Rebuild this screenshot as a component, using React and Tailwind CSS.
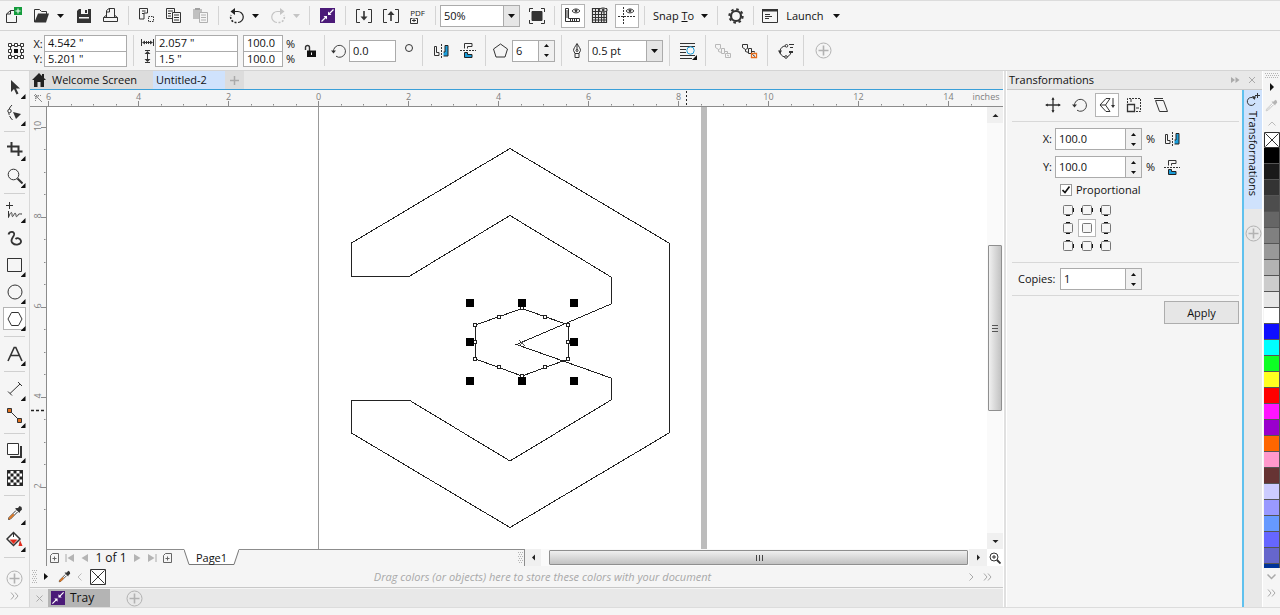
import React from "react";

function Icon({ w = 20, h = w, className = "", children, ...rest }) {
  return (
    <svg width={w} height={h} viewBox={`0 0 ${w} ${h}`} fill="none" stroke="#333" aria-hidden="true" className={`shrink-0 ${className}`} {...rest}>
      {children}
    </svg>
  );
}

function Tool({ label, className = "", active = false, children }) {
  return (
    <button
      type="button"
      aria-label={label}
      className={`relative flex w-[27px] shrink-0 items-center justify-center ${className}`}
    >
      <span className={`flex h-6 w-6 items-center justify-center border ${active ? "border-[#b4b4b4] bg-white" : "border-transparent"}`}>
        {children}
      </span>
    </button>
  );
}

function Caret({ color = "#111" }) {
  return (
    <Icon w={7} h={4}>
      <path d="M0 0h7L3.500 4z" fill={color} stroke="none" />
    </Icon>
  );
}

function CaretButton({ label, color, className = "mr-1" }) {
  return (
    <button type="button" aria-label={label} className={`flex w-[11px] shrink-0 items-center justify-center self-stretch ${className}`}>
      <Caret color={color} />
    </button>
  );
}

function Sep() {
  return <div className="mx-1 w-px shrink-0 self-stretch bg-[#d4d4d4]" />;
}

function Spin({ label, height = "h-[22px]", width, value, id }) {
  return (
    <div className={`flex shrink-0 border border-[#ababab] bg-white ${height} ${width}`}>
      <input id={id} aria-label={label} defaultValue={value} className="w-0 min-w-0 flex-1 bg-white px-[3px] outline-none" />
      <div className="flex w-4 flex-col border-l border-[#ababab] bg-[#f0f0f0]">
        <button type="button" aria-label={`Increase ${label}`} className="flex flex-1 items-center justify-center">
          <Icon w={5} h={3}><path d="M0 3h5L2.500 0z" fill="#111" stroke="none" /></Icon>
        </button>
        <button type="button" aria-label={`Decrease ${label}`} className="flex flex-1 items-center justify-center">
          <Icon w={5} h={3}><path d="M0 0h5L2.500 3z" fill="#111" stroke="none" /></Icon>
        </button>
      </div>
    </div>
  );
}

function Combo({ label, value, width }) {
  return (
    <div className={`relative flex h-[22px] shrink-0 border border-[#ababab] bg-white ${width}`}>
      <select aria-label={label} className="w-full appearance-none bg-transparent px-[3px] outline-none">
        <option>{value}</option>
      </select>
      <span className="pointer-events-none absolute inset-y-0 right-0 flex w-4 items-center justify-center border-l border-[#ababab] bg-[#e6e6e6]">
        <Caret />
      </span>
    </div>
  );
}

function Pair({ a, b, la, lb, width }) {
  const cls = "block h-[15px] w-full bg-white px-[3px] outline-none";
  return (
    <div className={`shrink-0 border border-[#ababab] ${width}`}>
      <input aria-label={la} defaultValue={a} className={cls} />
      <input aria-label={lb} defaultValue={b} className={`${cls} border-t border-[#ababab]`} />
    </div>
  );
}

function MirrorH() {
  return (
    <Icon w={16} h={14}>
      <path d="M1.500 2.500h2v6h2.500v3H1.500z" />
      <path d="M8.500 0v14" strokeDasharray="2 1" />
      <path d="M14.500 2.500h-2v6h-1.500v3h3.500z" fill="#1b9dd9" stroke="#1b9dd9" />
      <path d="M15 1.500h-3v6.500h-1.500M15 1.500v10.500h-4.500" stroke="#222" />
    </Icon>
  );
}

function MirrorV() {
  return (
    <Icon w={16} h={15}>
      <path d="M4.500 5.500v-5H12v3H7.500v2" />
      <path d="M0 7.500h16" strokeDasharray="2 1" />
      <path d="M4.500 9.500h3v2H12v3H4.500z" fill="#1b9dd9" stroke="#222" />
    </Icon>
  );
}

function PlusCircle() {
  return (
    <Icon w={17} stroke="#b2b2b2">
      <circle cx="8.500" cy="8.500" r="7.500" />
      <path d="M8.500 3.500v10M3.500 8.500h10" strokeWidth="1.600" />
    </Icon>
  );
}

function Purple({ size = 15 }) {
  return (
    <svg width={size} height={size} viewBox="0 0 15 15" fill="none" stroke="#fff" strokeWidth="1.300" aria-hidden="true" className="shrink-0">
      <rect width="15" height="15" fill="#4b1a78" stroke="none" />
      <path d="M13.500 1.500 9 6M1.500 13.500 6 9" />
      <path d="M8 3.500V7h3.500zM7 11.500V8H3.500z" fill="#fff" stroke="none" />
    </svg>
  );
}

function Dropper({ w = 16, tip = "#d97828", body = "#333" }) {
  return (
    <svg width={w} height={w} viewBox="0 0 16 16" fill="none" stroke={body} aria-hidden="true" className="shrink-0">
      <path d="M9 5.500 2 12.500 1.500 14.500 3.500 14 10.500 7" fill="#fff" />
      <path d="M6 8.500 2 12.500 1.500 14.500 3.500 14 7.500 10z" fill={tip} stroke="none" />
      <path d="M8 3.500 12.500 8 13 6.500 15 4.500 14.500 2 12.500 1 11 3 9.500 3z" fill={body} stroke="none" />
    </svg>
  );
}

function Rotate({ size = 16 }) {
  return (
    <svg width={size} height={size} viewBox="0 0 16 16" fill="none" stroke="#444" aria-hidden="true" className="shrink-0">
      <path d="M2.500 9A6 6 0 1 1 5 13.200" />
      <path d="M0 7.500h5L2.500 10.500z" fill="#333" stroke="none" />
    </svg>
  );
}

function UndoGlyph({ color, flip }) {
  return (
    <svg width="16" height="16" viewBox="0 0 16 16" fill="none" stroke={color} strokeWidth="1.200" aria-hidden="true" className={flip ? "-scale-x-100" : ""}>
      <path d="M3 3.500h5.500A5.500 5.500 0 0 1 9 14.500" />
      <path d="M7.500 14.500A5.500 5.500 0 0 1 2 7" strokeWidth="1.600" strokeDasharray="2 1.500" />
      <path d="M1.500 3.500 6 0v7z" fill={color} stroke="none" />
    </svg>
  );
}

function StandardBar() {
  return (
    <div role="toolbar" aria-label="Standard" className="flex h-[31px] items-center border-t border-b border-t-[#dcdcdc] border-b-[#d4d4d4] bg-[#f5f5f5] py-[5px]">
      <Tool label="New" className="mr-px">
        <Icon w={17}>
          <path d="M10 3.500H5.500L1.500 7v8.500h10V9M5.500 3.500V7h-4" />
          <path d="M9 0h8v8H9z" fill="#149c3c" stroke="none" />
          <path d="M13 1.500v5M10.500 4h5" stroke="#fff" />
        </Icon>
      </Tool>
      <Tool label="Open">
        <Icon w={17}>
          <path d="M1.500 15V2.500h5l2 2h5V7" />
          <path d="M1.500 15 5 6.500h11L13 15.500H1.500z" fill="#333" stroke="none" />
        </Icon>
      </Tool>
      <CaretButton label="Recent files" />
      <Tool label="Save">
        <Icon w={16}>
          <path d="M1 3 3 1h12v14H1z" fill="#333" stroke="none" />
          <path d="M5 1h7v5H5zM3 9h10v1.500H3z" fill="#f5f5f5" stroke="none" />
          <path d="M9 2h2v3H9z" fill="#333" stroke="none" />
        </Icon>
      </Tool>
      <Tool label="Print">
        <Icon w={17}>
          <path d="M4.500 10V3.500L7 1.500h5.500V10M7.500 2v3H5M4 8.500l-2.500 2v4h14v-4l-2.500-2M1.500 10.500h14" />
        </Icon>
      </Tool>
      <Sep />
      <Tool label="Cut">
        <Icon w={17}>
          <path d="M1.500 12V1.500h8v4.500H6v6zM4 4h3.500M4 6.500h2" />
          <path d="M10.500 9.500h5v5h-5z" strokeDasharray="1.500 1" />
        </Icon>
      </Tool>
      <Tool label="Copy">
        <Icon w={17}>
          <path d="M7 11.500H1.500v-10h8V5M3 4h5M3 6.500h3M3 9h3" />
          <path d="M7.500 5.500h8v10h-8zM9 8h5M9 10.500h5M9 13h5" />
        </Icon>
      </Tool>
      <Tool label="Paste">
        <Icon w={17} stroke="#b0b0b0">
          <path d="M1 2h9v10H1z" fill="#c0c0c0" stroke="none" />
          <path d="M3 1h5v2H3z" fill="#a0a0a0" stroke="none" />
          <path d="M7.500 5.500h8v10h-8zM9 8h5M9 10.500h5M9 13h5" fill="#f5f5f5" />
        </Icon>
      </Tool>
      <Sep />
      <Tool label="Undo"><UndoGlyph color="#222" /></Tool>
      <CaretButton label="Undo history" className="mr-[3px]" />
      <Tool label="Redo"><UndoGlyph color="#c4c4c4" flip /></Tool>
      <CaretButton label="Redo history" color="#c4c4c4" className="mr-[3px]" />
      <Sep />
      <Tool label="Content exchange"><Purple /></Tool>
      <Sep />
      <Tool label="Import">
        <Icon w={16}>
          <path d="M4 1.500H.500v13H4M12 1.500h3.500v13H12" />
          <path d="M8 3v7" strokeWidth="1.600" />
          <path d="M4.500 8.500h7L8 12.500z" fill="#333" stroke="none" />
        </Icon>
      </Tool>
      <Tool label="Export">
        <Icon w={16}>
          <path d="M4 1.500H.500v13H4M12 1.500h3.500v13H12" />
          <path d="M8 5v8" strokeWidth="1.600" />
          <path d="M4.500 7h7L8 3z" fill="#333" stroke="none" />
        </Icon>
      </Tool>
      <Tool label="Publish to PDF">
        <span className="flex flex-col items-center">
          <span className="text-[8px] leading-[9px] text-[#222]">PDF</span>
          <Icon w={8} h={7} className="mr-2"><path d="M2.500 1.500h-2v5h7v-5h-2M4 1v4M2 3.500h4" /></Icon>
        </span>
      </Tool>
      <Sep />
      <div className="mr-[3px] flex">
        <Combo label="Zoom level" value="50%" width="w-20" />
      </div>
      <Tool label="Full screen preview">
        <Icon w={16}>
          <path d="M3 3.500h10v9H3z" fill="#333" />
          <path d="M.500 4V.500H4M12 .500h3.500V4M15.500 12v3.500H12M4 15.500H.500V12" />
        </Icon>
      </Tool>
      <Sep />
      <Tool label="Show rulers" active>
        <Icon w={17}>
          <path d="M1.500 1.500h3v10h11v3h-14zM2 4h2M2 6h2M2 8h2M2 10h2M6.500 12v2M8.500 12v2M10.500 12v2M12.500 12v2" />
          <path d="M8 4c2-2.700 6-2.700 8 0-2 2.500-6 2.500-8 0z" />
          <circle cx="12" cy="3.800" r="1" fill="#333" />
        </Icon>
      </Tool>
      <Tool label="Show grid">
        <Icon w={17}>
          <path d="M1.500 1.500h14v14h-14zM4.500 1v15M7.500 1v15M10.500 1v15M13 1v15M1 4.500h15M1 7.500h15M1 10.500h15M1 13h15" strokeWidth="1.200" />
          <path d="M8 3c2-2.700 6-2.700 8.500 0-2.500 2.500-6.500 2.500-8.500 0z" fill="#f5f5f5" />
          <circle cx="12.200" cy="3" r="1" fill="#333" />
        </Icon>
      </Tool>
      <Tool label="Show guidelines" active>
        <Icon w={17}>
          <path d="M5.500 0v17M0 9.500h17" strokeDasharray="2 1" />
          <path d="M8 4c2-2.700 6-2.700 8 0-2 2.500-6 2.500-8 0z" />
          <circle cx="12" cy="3.800" r="1" fill="#333" />
        </Icon>
      </Tool>
      <Sep />
      <button type="button" className="ml-1 mr-[5px] flex items-center gap-[7px] whitespace-nowrap">
        <span>Snap <u>T</u>o</span>
        <Caret />
      </button>
      <Sep />
      <Tool label="Options">
        <Icon w={16}>
          <circle cx="8" cy="8" r="5" strokeWidth="2.200" />
          <circle cx="8" cy="8" r="6.700" strokeWidth="2" strokeDasharray="2.600 2.660" />
        </Icon>
      </Tool>
      <Sep />
      <button type="button" className="ml-1 flex items-center whitespace-nowrap">
        <Icon w={16} className="mr-2">
          <path d="M.500 1.500h15v13H.500zM3 6.500h5M3 8.500h7M3 10.500h4" />
          <path d="M0 1h16v2.500H0z" fill="#333" stroke="none" />
        </Icon>
        <span className="mr-[9px]">Launch</span>
        <Caret />
      </button>
    </div>
  );
}

function PropertyBar() {
  return (
    <div role="toolbar" aria-label="Property bar" className="flex h-10 items-center border-b border-[#d4d4d4] bg-[#f5f5f5] py-1">
      <Tool label="Object origin" className="mr-[5px]">
        <Icon w={16} className="ml-1">
          <path d="M2.500 2.500h11v11h-11z" />
          <path d="M.500.500h3v3h-3zM6.500.500h3v3h-3zM12.500.500h3v3h-3zM.500 6.500h3v3h-3zM12.500 6.500h3v3h-3zM.500 12.500h3v3h-3zM6.500 12.500h3v3h-3zM12.500 12.500h3v3h-3z" fill="#fff" />
          <path d="M6 6h4v4H6z" fill="#111" stroke="none" />
        </Icon>
      </Tool>
      <div className="w-3 text-center leading-[15px]">
        <div>X:</div>
        <div>Y:</div>
      </div>
      <Pair a={'4.542 "'} b={'5.201 "'} la="X position" lb="Y position" width="w-[83px]" />
      <div className="ml-[6px] w-px self-stretch bg-[#d4d4d4]" />
      <div className="ml-1.5 mr-px flex w-[14px] flex-col items-center gap-1">
        <Icon w={13} h={7}><path d="M.500 0v7M12.500 0v7M2 3.500h9" /><path d="M1 3.500 4 1.500v4zM12 3.500 9 1.500v4z" fill="#333" stroke="none" /><path d="M5.500 2v3M7.500 2v3" /></Icon>
        <Icon w={7} h={13}><path d="M1 .500h5M1 12.500h5M3.500 2v9" /><path d="M3.500 1 .500 4h6zM3.500 12 .500 9h6z" fill="#333" stroke="none" /></Icon>
      </div>
      <Pair a={'2.057 "'} b={'1.5 "'} la="Object width" lb="Object height" width="w-[83px]" />
      <div className="ml-[5px] mr-[3px]">
        <Pair a="100.0" b="100.0" la="Scale horizontal" lb="Scale vertical" width="w-10" />
      </div>
      <div className="w-[11px] leading-[15px]">
        <div>%</div>
        <div>%</div>
      </div>
      <Tool label="Lock ratio" className="-mr-1">
        <Icon w={14} h={14}>
          <path d="M1.500 6V3.500a2 2 0 0 1 4 0V7" strokeWidth="1.400" />
          <path d="M3 6.500h9V13H3z" fill="#111" stroke="none" />
          <path d="M7.500 8.500v2.500" stroke="#f5f5f5" />
        </Icon>
      </Tool>
      <Sep />
      <label htmlFor="angle" aria-label="Rotation" className="flex w-5 justify-center"><Rotate /></label>
      <input id="angle" defaultValue="0.0" className="h-[22px] w-[47px] shrink-0 border border-[#ababab] bg-white px-[3px] outline-none" />
      <Icon w={8} className="mb-1.5 ml-[9px] mr-[5px]"><circle cx="4" cy="4" r="3.500" /></Icon>
      <Sep />
      <Tool label="Mirror horizontally"><MirrorH /></Tool>
      <Tool label="Mirror vertically"><MirrorV /></Tool>
      <Sep />
      <label htmlFor="sides" aria-label="Points or sides" className="flex w-[22px] justify-end pr-1">
        <Icon w={15}><path d="M7.500 1 14.500 6 12 14H3L.500 6z" /></Icon>
      </label>
      <Spin id="sides" label="Points or sides" value="6" width="w-[43px]" />
      <div className="w-[2px]" />
      <Sep />
      <label htmlFor="outline" aria-label="Outline width" className="flex w-[22px] justify-center">
        <Icon w={10} h={15}><path d="M5 .500C3 4 1.500 5.500 1.500 7.500L3 10.500h4L8.500 7.500C8.500 5.500 7 4 5 .500zM5 1v6M3 10.500v4h4v-4" /><circle cx="5" cy="7.500" r="1" /></Icon>
      </label>
      <Combo label="Outline width" value="0.5 pt" width="w-[75px]" />
      <div className="w-[2px]" />
      <Sep />
      <Tool label="Wrap text">
        <Icon w={18} h={18}>
          <path d="M1 1.500h15M1 4.500h15M1 7.500h6M1 10.500h6M1 13.500h15M1 16.500h12" strokeWidth="1.200" />
          <circle cx="11.500" cy="8.500" r="3.700" stroke="#1b9dd9" fill="#f5f5f5" />
          <path d="M18 13v5h-5z" fill="#111" stroke="none" />
        </Icon>
      </Tool>
      <Sep />
      <Tool label="To front of layer" className="-ml-px">
        <Icon w={16} stroke="#b8b8b8"><path d="M.500 1.500h5v4l-2 1-3-2zM3.500 6.500v2l3 1M6.500 5.500h3v5h-3zM9.500 8.500h3v2M10.500 10.500h5v4h-5zM12 12l2 1" /></Icon>
      </Tool>
      <Tool label="To back of layer">
        <Icon w={16}><path d="M.500 1.500h5v4l-2 1-3-2zM3.500 6.500v2l3 1M6.500 5.500h3v5h-3zM9.500 8.500h3v1" /><path d="M9.500 10.500h5v4h-5z" stroke="#e86c1a" strokeWidth="1.300" fill="#fff" /><path d="M10.500 11.500l2.500 2" /></Icon>
      </Tool>
      <Sep />
      <Tool label="Convert to curves">
        <Icon w={16}><path d="M8 3A5.500 5.500 0 1 0 13 9M11 1.500h5M12 4.500h3" /><path d="M0 7.500h4L2 11zM11 8h4v2h-4z" fill="#333" stroke="none" /><circle cx="8" cy="14" r="1.300" fill="#fff" /><circle cx="8.500" cy="2.800" r="1.300" fill="#fff" /></Icon>
      </Tool>
      <Sep />
      <Tool label="Customize" className="ml-[2px]"><PlusCircle /></Tool>
    </div>
  );
}

function Flyout() {
  return <span className="absolute bottom-px right-[2px] h-[5px] w-[5px] bg-[#111] [clip-path:polygon(100%_0,100%_100%,0_100%)]" />;
}

function BoxTool({ label, active, flyout = true, children }) {
  return (
    <button type="button" aria-label={label} aria-pressed={!!active} className="relative flex h-[27px] w-full items-center justify-center">
      <span className={`flex h-[23px] w-[23px] items-center justify-center border ${active ? "border-[#b4b4b4] bg-white" : "border-transparent"}`}>{children}</span>
      {flyout && <span className="absolute inset-0 mx-auto w-[26px]"><Flyout /></span>}
    </button>
  );
}

function BoxSep() {
  return <div className="mx-1 mb-[3px] mt-1 h-px shrink-0 bg-[#d0d0d0]" />;
}

function Toolbox() {
  const squares = [];
  for (let r = 0; r < 5; r++) for (let c = 0; c < 5; c++) if ((r + c) % 2 === 0) squares.push([c, r]);
  return (
    <nav aria-label="Toolbox" className="flex w-[30px] shrink-0 flex-col border-r border-[#d8d8d8] bg-[#f5f5f5] pt-[2px]">
      <BoxTool label="Pick tool">
        <Icon w={12} h={16}><path d="M2 1v12l3-3 2.500 5.500 2-1L7 9.500h4z" fill="#333" stroke="none" /></Icon>
      </BoxTool>
      <BoxTool label="Shape tool">
        <Icon w={17}><path d="M6 0C1.500 4 1.500 10 6.500 15" strokeDasharray="5 1" /><circle cx="3.500" cy="6" r="1.700" fill="#fff" /><path d="M7 7l8 2-5 5z" fill="#333" stroke="none" /></Icon>
      </BoxTool>
      <BoxSep />
      <BoxTool label="Crop tool">
        <Icon w={16} strokeWidth="2"><path d="M4.500 1v9.500h11M0 5.500h11.500V15" /></Icon>
      </BoxTool>
      <BoxTool label="Zoom tool">
        <Icon w={16}><circle cx="6.500" cy="6.500" r="5.300" /><path d="M10.500 10.500l5 5" strokeWidth="2" /></Icon>
      </BoxTool>
      <BoxSep />
      <BoxTool label="Freehand tool">
        <Icon w={17}><path d="M3.500 0v7M0 3.500h7" /><path d="M2.500 9v6.500c2-6 3.500-6 3.500-3s1 2.500 2 0 2-1 2 1 1.500 1 2-.500 2-1 4-1" /></Icon>
      </BoxTool>
      <BoxTool label="Artistic media tool" flyout={false}>
        <Icon w={16} strokeWidth="1.800"><path d="M1.500 4.500C2.500 1 8 1 7 5 6 8 2.500 10 5.500 13s9 1.500 8.500-2C13.500 8 10 7.500 8.500 9" /></Icon>
      </BoxTool>
      <BoxTool label="Rectangle tool"><Icon w={16}><path d="M.500 1.500h14v13H.500z" /></Icon></BoxTool>
      <BoxTool label="Ellipse tool"><Icon w={16}><circle cx="8" cy="8" r="7" /></Icon></BoxTool>
      <BoxTool label="Polygon tool" active><Icon w={16}><path d="M4.500 1.500h7L15 8l-3.500 6.500h-7L1 8z" /></Icon></BoxTool>
      <BoxSep />
      <BoxTool label="Text tool">
        <Icon w={16} strokeWidth="1.600"><path d="M1 15 7.200 1.500h1.600L15 15M4 9.500h8" /></Icon>
      </BoxTool>
      <BoxSep />
      <BoxTool label="Parallel dimension tool"><Icon w={16}><path d="M3 12.500 13 3M1 10.500l4 4M11 1l4 4" /></Icon></BoxTool>
      <BoxTool label="Connector tool">
        <Icon w={17}><path d="M3 3l11 11" /><path d="M1.500 1.500h4v4h-4zM11.500 11.500h4v4h-4z" fill="#e07020" /></Icon>
      </BoxTool>
      <BoxSep />
      <BoxTool label="Drop shadow tool">
        <Icon w={17}><path d="M4 15h11V4" strokeWidth="2" /><path d="M1.500 1.500h11v11h-11z" fill="#fff" /></Icon>
      </BoxTool>
      <BoxTool label="Transparency tool" flyout={false}>
        <Icon w={16}><rect x=".500" y=".500" width="15" height="15" fill="#fff" />{squares.map(([c, r]) => <rect key={`${c}${r}`} x={c * 3 + 0.5} y={r * 3 + 0.5} width="3" height="3" fill="#222" stroke="none" />)}</Icon>
      </BoxTool>
      <BoxSep />
      <BoxTool label="Color eyedropper"><Dropper /></BoxTool>
      <BoxTool label="Interactive fill">
        <Icon w={17}><path d="M1 8 7.500 1.500 14 8l-6.500 6.500z" fill="#fff" strokeWidth="1.500" /><path d="M3.500 8.500h8l-4 4.500z" fill="#e02b1d" stroke="none" /><path d="M7.500 1v5" /><path d="M14 9l2.500 6h-4z" fill="#e02b1d" stroke="none" /></Icon>
      </BoxTool>
      <BoxSep />
      <div className="h-1" />
      <BoxTool label="Customize toolbox" flyout={false}><PlusCircle /></BoxTool>
      <button type="button" aria-label="More tools" className="flex h-2 items-center justify-center"><Chevrons /></button>
    </nav>
  );
}

function Chevrons() {
  return <Icon w={9} h={8} stroke="#a8a8a8"><path d="M1 .500 4 4 1 7.500M5 .500 8 4 5 7.500" /></Icon>;
}

const MARKS = [-6, -4, -2, 0, 2, 4, 6, 8, 10, 12, 14];

function TopRuler() {
  const halves = [];
  for (let i = -12; i <= 29; i++) if (i % 4 !== 0) halves.push(i);
  return (
    <div className="flex h-[17px] shrink-0 border-b border-[#8c8c8c] bg-[#f5f5f5]">
      <svg width="100%" height="16" aria-label="Horizontal ruler" role="img">
        <g stroke="#8a8a8a" fill="none">
          <path d="M4 5.500h8M5.500 4v8" strokeDasharray="1 1" /><path d="M6 6l6 6M6 6h3M6 6v3" />
          {MARKS.map((m) => <path key={m} d={`M${288.5 + m * 45} 11v5`} />)}
          {halves.map((i) => <path key={i} d={`M${288.5 + Math.round(i * 22.5)} 14v1.500`} />)}
          <path d="M656.500 1v15" stroke="#222" strokeDasharray="2 2" />
        </g>
        <g fill="#808080" fontSize="9" textAnchor="middle">
          {MARKS.map((m) => <text key={m} x={288.5 + m * 45} y="10">{Math.abs(m)}</text>)}
          <text x="956" y="10">inches</text>
        </g>
      </svg>
    </div>
  );
}

function SideRuler() {
  const halves = [];
  for (let i = 3; i <= 20; i++) if (i % 4 !== 0) halves.push(i);
  return (
    <div className="relative w-[17px] shrink-0 border-r border-[#8c8c8c] bg-[#f5f5f5]">
      <svg width="16" height="100%" className="absolute inset-0" aria-label="Vertical ruler" role="img">
        <g stroke="#8a8a8a">
          {[2, 4, 6, 8, 10].map((m) => <path key={m} d={`M11 ${470.5 - m * 45}h5`} />)}
          {halves.map((i) => <path key={i} d={`M14 ${470.5 - Math.round(i * 22.5)}h1.500`} />)}
          <path d="M1 303.500h15" stroke="#222" strokeWidth="1.500" strokeDasharray="3 2" />
        </g>
        <g fill="#808080" fontSize="9" textAnchor="middle">
          {[2, 4, 6, 8, 10].map((m) => <text key={m} transform={`translate(11 ${469 - m * 45}) rotate(-90)`}>{m}</text>)}
        </g>
      </svg>
    </div>
  );
}

const NODES = [[475, 325], [499, 317], [522, 308], [545, 317], [568, 325], [568, 342], [568, 359], [545, 367], [522, 376], [499, 367], [475, 359], [475, 342]];
const HANDLES = [[470, 303], [522, 303], [574, 303], [470, 342], [574, 342], [470, 381], [522, 381], [574, 381]];

function Canvas() {
  return (
    <div className="relative min-w-0 flex-1 bg-white">
      <svg width="100%" height="100%" className="absolute inset-0" role="img" aria-label="Drawing page">
        <g transform="translate(-47 -107)" fill="none" stroke="#222" shapeRendering="crispEdges">
          <path d="M318.500 100v500" stroke="#999" />
          <rect x="701" y="100" width="6" height="500" fill="#bcbcbc" stroke="none" />
          <path d="M510 148.500 669 243V433L510 527.500 351.500 433V400H409L510 461 611 400V378L516.500 344.500 611 304V277L510 215.500 409 276.500H351.500V243z" />
          <path d="M522 308.500 568.500 325V359L522 376 475.500 359V325z" />
          <path d="M519 340l6 6M525 340l-6 6" stroke="#555" />
          {NODES.map(([x, y]) => <rect key={`${x}-${y}`} x={x - 1.5} y={y - 1.5} width="3" height="3" fill="#fff" />)}
          {HANDLES.map(([x, y]) => <rect key={`${x}-${y}`} x={x - 4} y={y - 4} width="8" height="8" fill="#000" stroke="none" />)}
        </g>
      </svg>
    </div>
  );
}

function Arrow({ d }) {
  return <Icon w={7}><path d={d} fill="#222" stroke="none" /></Icon>;
}

function VScroll() {
  return (
    <div className="flex w-4 shrink-0 flex-col bg-[#fafafa]">
      <button type="button" aria-label="Scroll up" className="flex h-4 items-center justify-center bg-[#f0f0f0]"><Arrow d="M.500 5h6L3.500 2z" /></button>
      <div className="grow-[124]" />
      <div className="mx-px flex grow-[158] items-center justify-center rounded-[1px] border border-[#8f8f8f] bg-linear-to-r from-[#f0f0f0] to-[#c2c2c2]">
        <Icon w={6} h={8} stroke="#555"><path d="M0 1.500h6M0 4.500h6M0 7.500h6" /></Icon>
      </div>
      <div className="grow-[124]" />
      <button type="button" aria-label="Scroll down" className="flex h-4 items-center justify-center bg-[#f0f0f0]"><Arrow d="M.500 2h6L3.500 5z" /></button>
    </div>
  );
}

function NavButton({ label, children, className = "h-full w-[15px]" }) {
  return <button type="button" aria-label={label} className={`flex shrink-0 items-center justify-center ${className}`}>{children}</button>;
}

function AddPage() {
  return <Icon w={9} h={10} stroke="#666"><path d="M2.500.500h6v9h-8v-7zM4.500 3.500v4M2.500 5.500h4" /></Icon>;
}

function PageNav() {
  return (
    <div className="flex h-[17px] shrink-0">
      <div className="ml-4 flex grow-[478] basis-0 items-center border-r border-[#8c8c8c] bg-[#f5f5f5]">
        <div className="flex h-full items-center border-l border-t border-[#8c8c8c]">
          <NavButton label="Add page before"><AddPage /></NavButton>
          <NavButton label="First page"><Icon w={9} h={8}><path d="M1 0v8" stroke="#aaa" /><path d="M9 0v8L2.500 4z" fill="#b4b4b4" stroke="none" /></Icon></NavButton>
          <NavButton label="Previous page"><Icon w={7} h={8}><path d="M7 0v8L.500 4z" fill="#b4b4b4" stroke="none" /></Icon></NavButton>
          <span className="w-[38px] whitespace-nowrap text-center text-[12px] leading-4">1 of 1</span>
          <NavButton label="Next page"><Icon w={7} h={8}><path d="M0 0v8L6.500 4z" fill="#b4b4b4" stroke="none" /></Icon></NavButton>
          <NavButton label="Last page"><Icon w={9} h={8}><path d="M8 0v8" stroke="#aaa" /><path d="M0 0v8L6.500 4z" fill="#b4b4b4" stroke="none" /></Icon></NavButton>
          <NavButton label="Add page after"><AddPage /></NavButton>
          <div className="w-[9px]" />
        </div>
        <button type="button" className="relative flex h-full w-[55px] items-center justify-center">
          <svg width="55" height="17" viewBox="0 0 55 17" className="absolute inset-0" aria-hidden="true">
            <path d="M0 0h55L50 15.500H5z" fill="#fff" />
            <path d="M0 .500 5 15.500h45L55 .500" fill="none" stroke="#777" />
          </svg>
          <span className="relative">Page1</span>
        </button>
        <div className="flex h-full flex-1 items-center justify-end border-t border-[#8c8c8c] pr-px">
          <Grip h={12} />
        </div>
      </div>
      <div className="flex grow-[462] basis-0 items-stretch bg-[#fafafa]">
        <NavButton label="Scroll left" className="w-4 bg-[#f0f0f0]"><Arrow d="M5 .500v6L2 3.500z" /></NavButton>
        <div className="w-2" />
        <div className="my-px flex flex-1 items-center justify-center rounded-[1px] border border-[#8f8f8f] bg-linear-to-b from-[#f0f0f0] to-[#c2c2c2]">
          <Icon w={8} h={6} stroke="#444"><path d="M1.500 0v6M4.500 0v6M7.500 0v6" /></Icon>
        </div>
        <div className="w-px" />
        <NavButton label="Scroll right" className="w-[18px] bg-[#f0f0f0]"><Arrow d="M2 .500v6L5 3.500z" /></NavButton>
      </div>
      <NavButton label="Navigator" className="h-full w-4 bg-white"><Icon w={12}><circle cx="5" cy="5" r="4" /><path d="M8 8l3.500 3.500" strokeWidth="1.800" /><path d="M5 3v4M3 5h4" /></Icon></NavButton>
    </div>
  );
}

function Grip({ w = 5, h = 14 }) {
  const dots = [];
  for (let y = 0; y < h; y += 2) for (let x = (y / 2) % 2; x < w; x += 2) dots.push([x, y]);
  return <Icon w={w} h={h}>{dots.map(([x, y]) => <rect key={`${x}-${y}`} x={x} y={y} width="1" height="1" fill="#b4b4b4" stroke="none" />)}</Icon>;
}

function DocumentPalette() {
  return (
    <div className="flex h-[22px] shrink-0 items-center border-b border-[#c8c8c8] bg-[#f5f5f5] px-[2px]">
      <Grip />
      <NavButton label="Palette menu" className="ml-[3px] h-4 w-3"><Icon w={4} h={7}><path d="M0 0v7l4-3.500z" fill="#111" stroke="none" /></Icon></NavButton>
      <NavButton label="Pick color" className="ml-1 h-4 w-4"><Dropper w={13} /></NavButton>
      <NavButton label="Previous colors"><Icon w={5} h={8} stroke="#bbb"><path d="M4.500.500 1 4l3.500 3.500" /></Icon></NavButton>
      <NavButton label="No color" className="ml-[3px] h-4 w-4"><NoColor /></NavButton>
      <p className="flex-1 pl-4 text-center italic text-[#a8a8a8]">Drag colors (or objects) here to store these colors with your document</p>
      <NavButton label="Next colors" className="h-4 w-4"><Icon w={5} h={8} stroke="#aaa"><path d="M.500.500 4 4 .500 7.500" /></Icon></NavButton>
      <NavButton label="More colors" className="mr-1.5 h-4 w-4"><Chevrons /></NavButton>
    </div>
  );
}

function NoColor() {
  return <Icon w={16}><path d="M.500.500h15v15H.500z" fill="#fff" stroke="#333" /><path d="M1.500 1.500l13 13M14.500 1.500l-13 13" /></Icon>;
}

function TrayBar() {
  return (
    <div className="mt-px flex h-[18px] shrink-0 items-stretch bg-[#e8e8e8]">
      <NavButton label="Close tray" className="w-[18px]"><Icon w={7} stroke="#aaa"><path d="M.500.500l6 6M6.500.500l-6 6" /></Icon></NavButton>
      <button type="button" className="flex w-[62px] items-center gap-[5px] bg-[#b4b4b4] pl-[3px] text-[12px]"><Purple size={14} />Tray</button>
      <NavButton label="Add tray" className="ml-4 w-[17px]"><PlusCircle /></NavButton>
    </div>
  );
}

function Workspace() {
  return (
    <main className="flex min-w-0 flex-1 flex-col">
      <div className="flex h-[19px] shrink-0 border-b border-[#3a9fd8] bg-[#e8e8e8]">
        <button type="button" className="flex w-[123px] items-center gap-1.5 bg-[#dcdcdc] pl-[2px] whitespace-nowrap">
          <Icon w={14}><path d="M7 0 0 7h2v7h3.500V9h3v5H12V7h2L12 5V1h-2v2z" fill="#222" stroke="none" /></Icon>
          Welcome Screen
        </button>
        <button type="button" className="w-[72px] bg-[#cfe2fc] pl-[3px] text-left whitespace-nowrap">Untitled-2</button>
        <button type="button" aria-label="New tab" className="flex w-[19px] items-center justify-center bg-[#dcdcdc]"><Icon w={9} stroke="#aaa" strokeWidth="1.500"><path d="M4.500 0v9M0 4.500h9" /></Icon></button>
      </div>
      <TopRuler />
      <div className="flex min-h-0 flex-1">
        <SideRuler />
        <Canvas />
        <VScroll />
      </div>
      <PageNav />
      <DocumentPalette />
      <TrayBar />
    </main>
  );
}

const ANCHORS = [
  ["top left", "M10 4h2v4h-2zM4 10h4v2H4z"], ["top", "M0 4h2v4H0zM10 4h2v4h-2z"], ["top right", "M0 4h2v4H0zM4 10h4v2H4z"],
  ["left", "M4 0h4v2H4zM4 10h4v2H4z"], ["center", ""], ["right", "M4 0h4v2H4zM4 10h4v2H4z"],
  ["bottom left", "M4 0h4v2H4zM10 4h2v4h-2z"], ["bottom", "M0 4h2v4H0zM10 4h2v4h-2z"], ["bottom right", "M4 0h4v2H4zM0 4h2v4H0z"],
];

function Docker() {
  return (
    <aside aria-label="Transformations" className="flex w-[235px] shrink-0 flex-col bg-[#f5f5f5]">
      <header className="flex h-[19px] items-center border-b border-[#c8c8c8] bg-[#e8e8e8] pl-[2px]">
        <h2 className="flex-1">Transformations</h2>
      </header>
      <div className="flex flex-col pl-[5px] pr-[3px] pt-[3px]">
        <div className="flex h-6 items-center pl-[27px]">
          <Tool label="Position"><Icon w={16}><path d="M8 1v14M1 8h14" strokeWidth="1.300" /><path d="M6.500 3 8 0l1.500 3zM6.500 13 8 16l1.500-3zM3 6.500 0 8l3 1.500zM13 6.500 16 8l-3 1.500z" fill="#333" stroke="none" /></Icon></Tool>
          <Tool label="Rotate"><Rotate /></Tool>
          <Tool label="Scale and mirror" active><Icon w={16}><path d="M11 1.500H7L1 8l6 6.500h4L6.500 8zM1 8h5.500M14 1v8" /><path d="M12 8h4l-2 3z" fill="#333" stroke="none" /></Icon></Tool>
          <Tool label="Size"><Icon w={16}><path d="M1.500 7.500h7v7h-7z" strokeWidth="1.300" /><path d="M1.500 6V1.500h13v13H10" strokeDasharray="2 1" /><path d="M5 2v3M10 11h3" /></Icon></Tool>
          <Tool label="Skew"><Icon w={16}><path d="M2.500 3.500h8l4 11h-8zM1 1.500h9" /></Icon></Tool>
        </div>
        <div className="mt-1 border-t border-[#d8d8d8]" />
        {["X", "Y"].map((axis) => (
          <div key={axis} className="mt-[6px] flex h-[22px] items-center">
            <label htmlFor={`scale${axis}`} className="w-10 text-right">{axis}:</label>
            <div className="ml-[3px] mr-1"><Spin id={`scale${axis}`} label={`Scale ${axis}`} value="100.0" width="w-[87px]" /></div>
            <span className="w-3">%</span>
            <Tool label={`Mirror ${axis}`}>{axis === "X" ? <MirrorH /> : <MirrorV />}</Tool>
          </div>
        ))}
        <label className="relative ml-12 mt-[5px] flex h-[14px] items-center gap-1">
          <input type="checkbox" defaultChecked className="peer h-3 w-3 appearance-none border border-[#999] bg-white" />
          <svg width="8" height="8" viewBox="0 0 8 8" className="pointer-events-none invisible absolute ml-[2px] peer-checked:visible" fill="none" stroke="#111" strokeWidth="1.600" aria-hidden="true"><path d="M.500 4 3 6.500 7.500.500" /></svg>
          Proportional
        </label>
        <div className="ml-[47px] mt-1 grid w-[57px] grid-cols-3">
          {ANCHORS.map(([name, d]) => (
            <button key={name} type="button" aria-label={`Anchor ${name}`} className={`flex h-[18px] w-[18px] items-center justify-center border ${d ? "border-transparent" : "border-[#b8b8b8] bg-white"}`}>
              <Icon w={12}><path d={d || "M0 0"} fill="#111" stroke="none" /><rect x="1.500" y="1.500" width="9" height="9" rx="1" fill="#f5f5f5" stroke="#777" /></Icon>
            </button>
          ))}
        </div>
        <div className="mt-[7px] border-t border-[#d8d8d8]" />
        <div className="mt-[5px] flex items-center">
          <label htmlFor="copies" className="w-12 pl-[6px]">Copies:</label>
          <Spin id="copies" label="Copies" value="1" width="w-[82px]" />
        </div>
        <div className="mt-[5px] border-t border-[#d8d8d8]" />
        <button type="button" className="mt-[5px] h-[23px] w-[75px] self-end border border-[#adadad] bg-[#e6e6e6] text-[11px]">Apply</button>
      </div>
    </aside>
  );
}

function DockerTabs() {
  return (
    <div className="flex w-5 shrink-0 flex-col bg-[#e8e8e8]">
      <div className="relative h-[19px] border-b border-[#c8c8c8]">
        <div className="absolute inset-y-0 right-1.5 flex items-center gap-2">
          <button type="button" aria-label="Collapse docker"><Icon w={9} h={6}><path d="M0 0v6l4-3zM4.500 0v6l4-3z" fill="#aaa" stroke="none" /></Icon></button>
          <button type="button" aria-label="Close docker"><Icon w={8} stroke="#aaa"><path d="M1 1l6 6M7 1l-6 6" /></Icon></button>
        </div>
      </div>
      <div className="flex flex-1 flex-col items-center border-l-2 border-[#5fc1ee]">
        <button type="button" className="flex h-[119px] w-full flex-col items-center gap-1 bg-[#cfe2fc] pt-[3px]">
          <Icon w={14} h={14}><path d="M8 5.500A4 4 0 1 0 9 10M11.500 0v5M9 2.500h5" /><path d="M6 3l4 .500-1.500 3.500z" fill="#333" stroke="none" /></Icon>
          <span className="[writing-mode:vertical-rl]">Transformations</span>
        </button>
        <button type="button" aria-label="Add docker" className="mt-4"><PlusCircle /></button>
      </div>
    </div>
  );
}

const COLORS = ["#000000", "#1a1a1a", "#333333", "#4d4d4d", "#666666", "#808080", "#999999", "#b3b3b3", "#cccccc", "#e6e6e6", "#ffffff", "#0f0fff", "#00ffff", "#0dff24", "#ffff20", "#ff0000", "#ff14ff", "#9900cc", "#ff6600", "#ff99cc", "#663333", "#ccccff", "#9999ff", "#6699ff", "#6666ff", "#6666cc", "#003399"];

function Palette() {
  return (
    <div className="flex w-[18px] shrink-0 flex-col items-center border-l border-white bg-[#f5f5f5]">
      <div className="mt-[2px] flex h-[5px]"><Grip w={14} h={5} /></div>
      <NavButton label="Palette menu" className="h-[18px] w-4"><Icon w={4} h={8}><path d="M0 0v8l4-4z" fill="#111" stroke="none" /></Icon></NavButton>
      <NavButton label="Pick color" className="h-[18px] w-4"><Dropper w={13} tip="#ddd" body="#b4b4b4" /></NavButton>
      <NavButton label="Scroll colors up" className="h-[18px] w-4"><Icon w={8} h={5} stroke="#bbb"><path d="M.500 4.500 4 1l3.500 3.500" /></Icon></NavButton>
      <button type="button" aria-label="No color" className="shrink-0"><NoColor /></button>
      <div className="min-h-0 w-4 flex-1 overflow-hidden [contain:size]">
        {COLORS.map((c) => (
          <button key={c} type="button" aria-label={c} style={{ backgroundColor: c }} className="block h-4 w-4 border-b border-r border-[#555]" />
        ))}
      </div>
      <NavButton label="Scroll colors down" className="h-[17px] w-4"><Icon w={9} h={6} stroke="#aaa" strokeWidth="1.500"><path d="M.500.500l4 4 4-4" /></Icon></NavButton>
      <NavButton label="More colors" className="mb-[7px] h-[15px] w-4"><Chevrons /></NavButton>
    </div>
  );
}

export default function App() {
  return (
    <div className="flex min-h-screen flex-col overflow-hidden bg-[#f5f5f5] font-['Open_Sans','Noto_Sans',sans-serif] text-[11px] leading-[16px] text-[#111]">
      <StandardBar />
      <PropertyBar />
      <div className="flex flex-1 border-b border-[#dcdcdc]">
        <Toolbox />
        <Workspace />
        <div className="w-1 shrink-0 border-x border-white bg-[#e0e0e0]" />
        <Docker />
        <DockerTabs />
        <Palette />
      </div>
      <footer className="h-[7px] shrink-0" />
    </div>
  );
}
